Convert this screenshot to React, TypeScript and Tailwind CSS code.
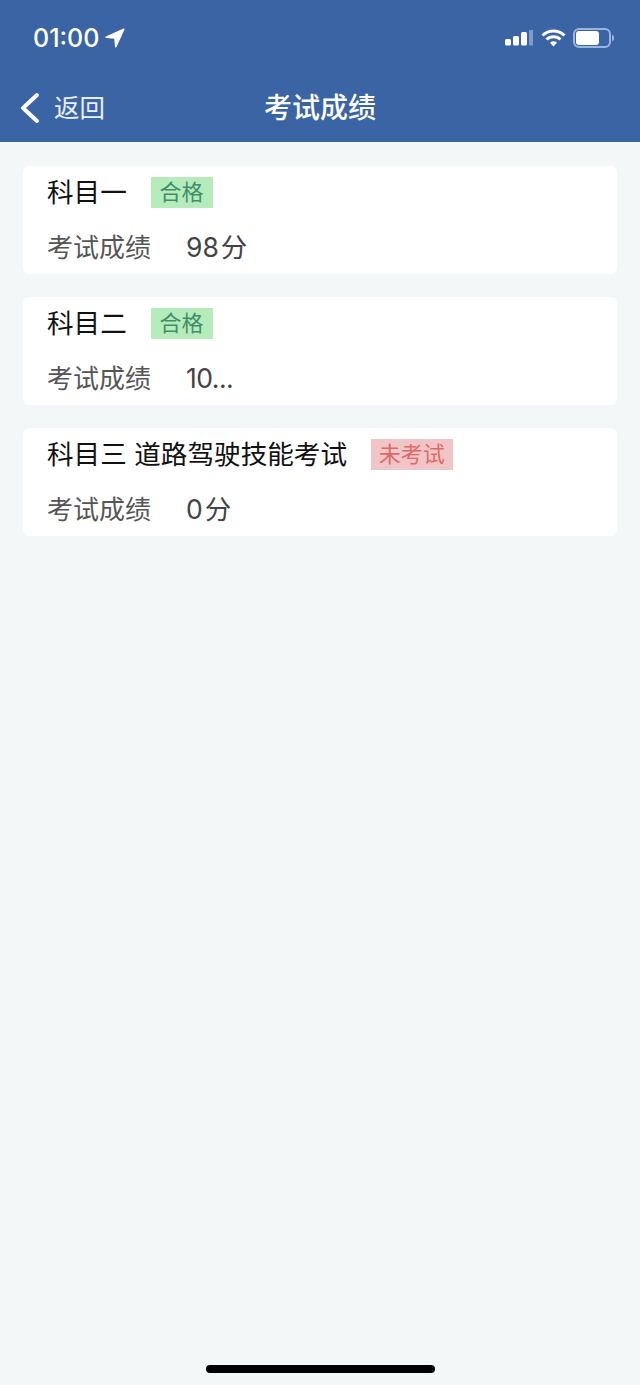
import React from "react";

const font = { fontFamily: 'Inter, "Noto Sans CJK SC", "Noto Sans", sans-serif' };

function Card({ title, badge, ok, score }: { title: string; badge: string; ok: boolean; score: React.ReactNode }) {
  return (
    <div className="h-[107.5px] rounded-[6px] bg-white px-6 pt-[9px]">
      <div className="flex h-[35px] items-center">
        <span className="text-[26.6px] leading-[35px] text-[#111111]">{title}</span>
        <span
          className={
            ok
              ? "ml-[23.8px] flex h-[31px] min-w-[62px] items-center justify-center bg-[#b6ecbb] px-[8px] text-[22px] text-[#3f8f6a]"
              : "ml-[23.8px] flex h-[31px] min-w-[62px] items-center justify-center bg-[#f1c5c7] px-[8px] text-[22px] text-[#dc6a6a]"
          }
        >
          {badge}
        </span>
      </div>
      <div className="mt-[20px] flex h-[35px] items-center leading-[35px] text-[#444444]">
        <span className="text-[26px] text-[#555555]">考试成绩</span>
        <span className="ml-[35px] flex items-center text-[26.5px]">{score}</span>
      </div>
    </div>
  );
}

function Score({ value }: { value: string }) {
  return (
    <>
      <span>{value}</span>
      <span className="ml-[2px]">分</span>
    </>
  );
}

export default function App() {
  return (
    <div className="flex h-[1385px] w-[640px] flex-col bg-[#f4f7f8]" style={font}>
      <header className="h-[142px] shrink-0 bg-[#3a64a3] text-white">
        <div className="flex h-[75px] items-start justify-between pl-[33px] pr-[26px] pt-[22px]">
          <div className="flex items-center gap-[6px]">
            <span className="text-[25px] font-medium leading-[32px]">01:00</span>
            <svg width="20" height="20" viewBox="0 0 20 20" fill="white" stroke="white" strokeWidth="1.5" strokeLinejoin="round">
              <path d="M18.8 1.2 1.2 9.3l8.7.8.9 8.7z" />
            </svg>
          </div>
          <div className="flex items-center gap-[8px] pt-[6px]">
            <svg width="28" height="16" viewBox="0 0 28 16">
              <rect x="0" y="9" width="6" height="6.5" rx="1.5" fill="white" />
              <rect x="8" y="6" width="6" height="9.5" rx="1.5" fill="white" />
              <rect x="16" y="2" width="6" height="13.5" rx="1.5" fill="white" />
              <rect x="24" y="0" width="5" height="15.5" rx="1" fill="#7d9bcb" />
            </svg>
            <svg width="25" height="18" viewBox="0 0 25 18" fill="none" stroke="white" strokeWidth="3">
              <path d="M1.5 6.5a16 16 0 0 1 22 0" />
              <path d="M5.5 10.5a10 10 0 0 1 14 0" />
              <path d="M12.5 17.5 9 13.8a5 5 0 0 1 7 0z" fill="white" stroke="none" />
            </svg>
            <div className="-ml-[1px] flex items-center">
              <div className="flex h-[20px] w-[38px] items-center rounded-[6px] border-2 border-[#9db5dc] p-[1px]">
                <div className="h-full w-[23px] rounded-[3px] bg-white" />
              </div>
              <div className="ml-[1px] h-[6px] w-[2px] rounded-r-sm bg-[#9db5dc]" />
            </div>
          </div>
        </div>
        <div className="relative flex h-[67px] items-center justify-center pb-[2px]">
          <div className="absolute left-[20px] top-[17px] flex items-center">
            <svg width="20" height="32" viewBox="0 0 20 32" fill="none" stroke="white" strokeWidth="4" strokeLinecap="round" strokeLinejoin="round">
              <path d="M17 3 3 16l14 13" />
            </svg>
            <span className="ml-[14px] text-[25.5px] leading-[32px] text-[#e9eef6]">返回</span>
          </div>
          <span className="text-[28px] font-medium leading-[36px]">考试成绩</span>
        </div>
      </header>
      <main className="flex flex-col gap-[23.5px] px-[23px] pt-[24px]">
        <Card title="科目一" badge="合格" ok score={<Score value="98" />} />
        <Card title="科目二" badge="合格" ok score={<span className="tracking-[-0.5px]">10...</span>} />
        <Card title="科目三 道路驾驶技能考试" badge="未考试" ok={false} score={<Score value="0" />} />
      </main>
      <div className="mt-auto flex justify-center pb-[12px]">
        <div className="h-[8px] w-[229px] rounded-full bg-black" />
      </div>
    </div>
  );
}
